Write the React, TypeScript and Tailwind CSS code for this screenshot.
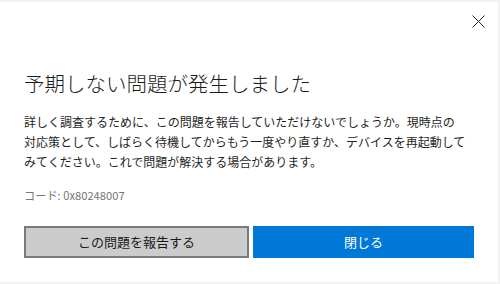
const font = { fontFamily: '"Noto Sans CJK JP", "Noto Sans", sans-serif' };

export default function App() {
  return (
    <div className="w-[500px] h-[284px] bg-[#f2f2f2] overflow-hidden" style={font}>
      <div className="w-[498px] h-[280px] mt-[2px] bg-white flex flex-col px-6">
        <div className="flex justify-end pt-[13px] -mr-[11px]">
          <button className="w-[13px] h-[13px] flex items-center justify-center">
            <svg width="13" height="13" viewBox="0 0 13 13">
              <path d="M0.5 0.5 L12.5 12.5 M12.5 0.5 L0.5 12.5" stroke="#222" strokeWidth="1" />
            </svg>
          </button>
        </div>

        <h1 className="mt-[41px] text-[20.5px] leading-[28px] font-light text-[#1a1a1a] whitespace-nowrap">
          予期しない問題が発生しました
        </h1>

        <p className="mt-[15px] text-[12px] leading-[20px] text-[#1f1f1f] whitespace-nowrap">
          詳しく調査するために、この問題を報告していただけないでしょうか。現時点の
          <br />
          対応策として、しばらく待機してからもう一度やり直すか、デバイスを再起動して
          <br />
          みてください。これで問題が解決する場合があります。
        </p>

        <p className="mt-[15px] text-[11.2px] leading-[16px] text-[#767676]">
          コード: 0x80248007
        </p>

        <div className="mt-[23px] flex gap-1 h-8">
          <button className="flex-1 bg-[#cccccc] border-2 border-[#7a7a7a] text-[13px] text-[#1a1a1a] flex items-center justify-center">
            この問題を報告する
          </button>
          <button className="flex-1 bg-[#0078d7] text-white text-[13px] flex items-center justify-center">
            閉じる
          </button>
        </div>
      </div>
    </div>
  );
}
